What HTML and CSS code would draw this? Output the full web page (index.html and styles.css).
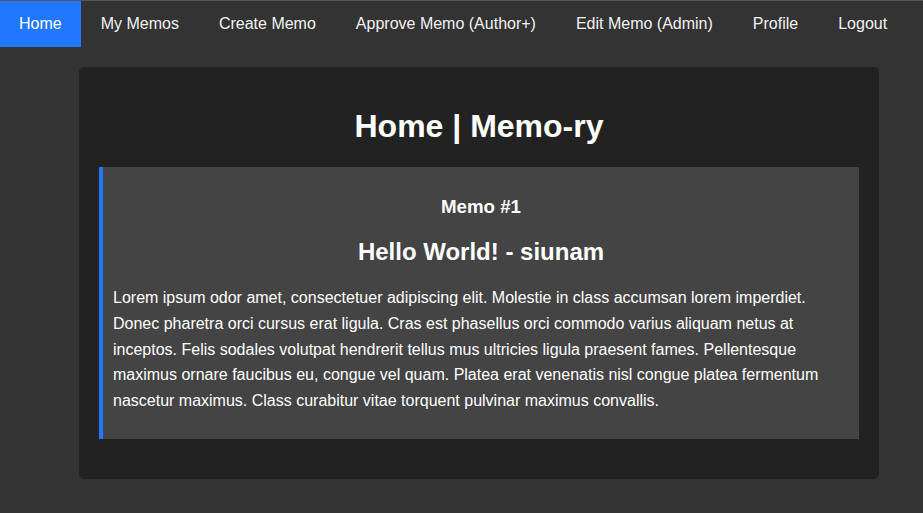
FILE: index.html
```html
<!DOCTYPE html>
<html lang="en">
<head>
<meta charset="utf-8">
<title>Home | Memo-ry</title>
<link rel="stylesheet" href="styles.css">
</head>
<body>
<nav class="topnav">
  <a class="nav-link active" href="#">Home</a>
  <a class="nav-link" href="#">My Memos</a>
  <a class="nav-link" href="#">Create Memo</a>
  <a class="nav-link" href="#">Approve Memo (Author+)</a>
  <a class="nav-link" href="#">Edit Memo (Admin)</a>
  <a class="nav-link" href="#">Profile</a>
  <a class="nav-link" href="#">Logout</a>
</nav>
<main class="container">
  <h1 class="page-title">Home | Memo-ry</h1>
  <section class="memo">
    <h3 class="memo-id">Memo #1</h3>
    <h2 class="memo-title">Hello World! - siunam</h2>
    <p class="memo-body">Lorem ipsum odor amet, consectetuer adipiscing elit. Molestie in class accumsan lorem imperdiet. Donec pharetra orci cursus erat ligula. Cras est phasellus orci commodo varius aliquam netus at inceptos. Felis sodales volutpat hendrerit tellus mus ultricies ligula praesent fames. Pellentesque maximus ornare faucibus eu, congue vel quam. Platea erat venenatis nisl congue platea fermentum nascetur maximus. Class curabitur vitae torquent pulvinar maximus convallis.</p>
  </section>
</main>
</body>
</html>
```
FILE: styles.css
```css
html, body {
  margin: 0;
  padding: 0;
}
body {
  background: #333333;
  color: #ffffff;
  font-family: "Liberation Sans", Arial, sans-serif;
  font-size: 16px;
}
.topnav {
  display: flex;
  background: #333333;
  border-top: 1px solid #555555;
}
.nav-link {
  display: block;
  color: #f2f2f2;
  text-decoration: none;
  padding: 14px 20px;
  line-height: 18px;
  font-size: 16px;
}
.nav-link.active {
  background: #2177ff;
  color: #ffffff;
  padding: 14px 19px;
}
.container {
  width: 760px;
  margin: 20px 0 0 79px;
  padding: 20px;
  background: #222222;
  border-radius: 5px;
}
.page-title {
  text-align: center;
  font-size: 32px;
  margin: 21.44px 0;
}
.memo {
  background: #444444;
  border-left: 4px solid #2177ff;
  padding: 10px;
  margin-bottom: 20px;
}
.memo-id {
  text-align: center;
  font-size: 18.72px;
  margin: 18.72px 0;
}
.memo-title {
  text-align: center;
  font-size: 24px;
  margin: 19.92px 0;
}
.memo-body {
  line-height: 1.6;
  margin: 16px 0;
}
```
